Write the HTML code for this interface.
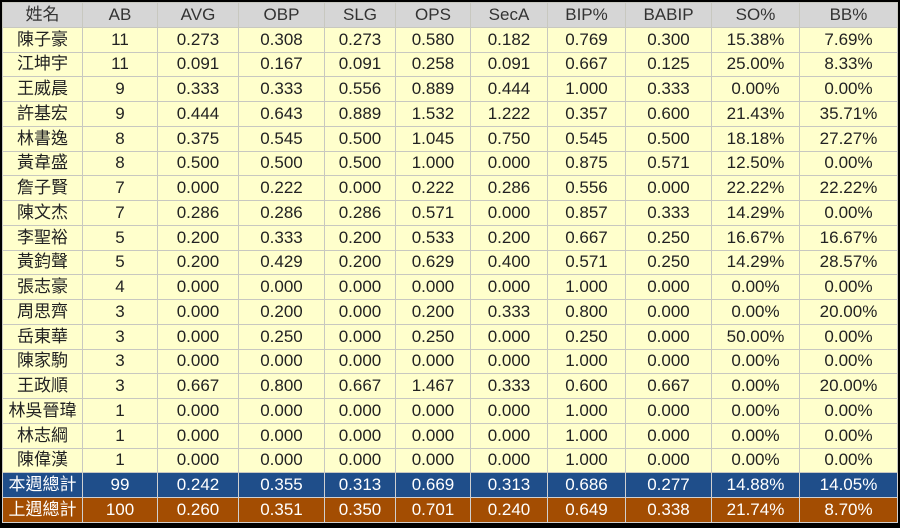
<!DOCTYPE html>
<html><head><meta charset="utf-8"><style>
html,body{margin:0;padding:0;background:#000;width:900px;height:528px;overflow:hidden}
table{position:absolute;left:2px;top:2px;border-collapse:collapse;table-layout:fixed;width:895px}
td{height:23.76px;padding:0;border:1px solid #c8c8c0;text-align:center;font-family:"Liberation Sans","Noto Sans CJK TC",sans-serif;font-size:17px;color:#222;background:#ffffcc;white-space:nowrap;overflow:hidden;line-height:22px}
tr.h td{background:#d6d6d6;color:#333}
tr.b td{background:#1f4e8a;color:#fff;border-color:#d0d0d0}
tr.o td{background:#a34d02;color:#fff;border-color:#d0d0d0}
</style></head><body>
<table>
<colgroup><col style="width:80px"><col style="width:75px"><col style="width:81px"><col style="width:86px"><col style="width:71px"><col style="width:75px"><col style="width:77px"><col style="width:78px"><col style="width:86px"><col style="width:88px"><col style="width:98px"></colgroup>
<tr class="h"><td>姓名</td><td>AB</td><td>AVG</td><td>OBP</td><td>SLG</td><td>OPS</td><td>SecA</td><td>BIP%</td><td>BABIP</td><td>SO%</td><td>BB%</td></tr>
<tr><td>陳子豪</td><td>11</td><td>0.273</td><td>0.308</td><td>0.273</td><td>0.580</td><td>0.182</td><td>0.769</td><td>0.300</td><td>15.38%</td><td>7.69%</td></tr>
<tr><td>江坤宇</td><td>11</td><td>0.091</td><td>0.167</td><td>0.091</td><td>0.258</td><td>0.091</td><td>0.667</td><td>0.125</td><td>25.00%</td><td>8.33%</td></tr>
<tr><td>王威晨</td><td>9</td><td>0.333</td><td>0.333</td><td>0.556</td><td>0.889</td><td>0.444</td><td>1.000</td><td>0.333</td><td>0.00%</td><td>0.00%</td></tr>
<tr><td>許基宏</td><td>9</td><td>0.444</td><td>0.643</td><td>0.889</td><td>1.532</td><td>1.222</td><td>0.357</td><td>0.600</td><td>21.43%</td><td>35.71%</td></tr>
<tr><td>林書逸</td><td>8</td><td>0.375</td><td>0.545</td><td>0.500</td><td>1.045</td><td>0.750</td><td>0.545</td><td>0.500</td><td>18.18%</td><td>27.27%</td></tr>
<tr><td>黃韋盛</td><td>8</td><td>0.500</td><td>0.500</td><td>0.500</td><td>1.000</td><td>0.000</td><td>0.875</td><td>0.571</td><td>12.50%</td><td>0.00%</td></tr>
<tr><td>詹子賢</td><td>7</td><td>0.000</td><td>0.222</td><td>0.000</td><td>0.222</td><td>0.286</td><td>0.556</td><td>0.000</td><td>22.22%</td><td>22.22%</td></tr>
<tr><td>陳文杰</td><td>7</td><td>0.286</td><td>0.286</td><td>0.286</td><td>0.571</td><td>0.000</td><td>0.857</td><td>0.333</td><td>14.29%</td><td>0.00%</td></tr>
<tr><td>李聖裕</td><td>5</td><td>0.200</td><td>0.333</td><td>0.200</td><td>0.533</td><td>0.200</td><td>0.667</td><td>0.250</td><td>16.67%</td><td>16.67%</td></tr>
<tr><td>黃鈞聲</td><td>5</td><td>0.200</td><td>0.429</td><td>0.200</td><td>0.629</td><td>0.400</td><td>0.571</td><td>0.250</td><td>14.29%</td><td>28.57%</td></tr>
<tr><td>張志豪</td><td>4</td><td>0.000</td><td>0.000</td><td>0.000</td><td>0.000</td><td>0.000</td><td>1.000</td><td>0.000</td><td>0.00%</td><td>0.00%</td></tr>
<tr><td>周思齊</td><td>3</td><td>0.000</td><td>0.200</td><td>0.000</td><td>0.200</td><td>0.333</td><td>0.800</td><td>0.000</td><td>0.00%</td><td>20.00%</td></tr>
<tr><td>岳東華</td><td>3</td><td>0.000</td><td>0.250</td><td>0.000</td><td>0.250</td><td>0.000</td><td>0.250</td><td>0.000</td><td>50.00%</td><td>0.00%</td></tr>
<tr><td>陳家駒</td><td>3</td><td>0.000</td><td>0.000</td><td>0.000</td><td>0.000</td><td>0.000</td><td>1.000</td><td>0.000</td><td>0.00%</td><td>0.00%</td></tr>
<tr><td>王政順</td><td>3</td><td>0.667</td><td>0.800</td><td>0.667</td><td>1.467</td><td>0.333</td><td>0.600</td><td>0.667</td><td>0.00%</td><td>20.00%</td></tr>
<tr><td>林吳晉瑋</td><td>1</td><td>0.000</td><td>0.000</td><td>0.000</td><td>0.000</td><td>0.000</td><td>1.000</td><td>0.000</td><td>0.00%</td><td>0.00%</td></tr>
<tr><td>林志綱</td><td>1</td><td>0.000</td><td>0.000</td><td>0.000</td><td>0.000</td><td>0.000</td><td>1.000</td><td>0.000</td><td>0.00%</td><td>0.00%</td></tr>
<tr><td>陳偉漢</td><td>1</td><td>0.000</td><td>0.000</td><td>0.000</td><td>0.000</td><td>0.000</td><td>1.000</td><td>0.000</td><td>0.00%</td><td>0.00%</td></tr>
<tr class="b"><td>本週總計</td><td>99</td><td>0.242</td><td>0.355</td><td>0.313</td><td>0.669</td><td>0.313</td><td>0.686</td><td>0.277</td><td>14.88%</td><td>14.05%</td></tr>
<tr class="o"><td>上週總計</td><td>100</td><td>0.260</td><td>0.351</td><td>0.350</td><td>0.701</td><td>0.240</td><td>0.649</td><td>0.338</td><td>21.74%</td><td>8.70%</td></tr>
</table>
</body></html>
